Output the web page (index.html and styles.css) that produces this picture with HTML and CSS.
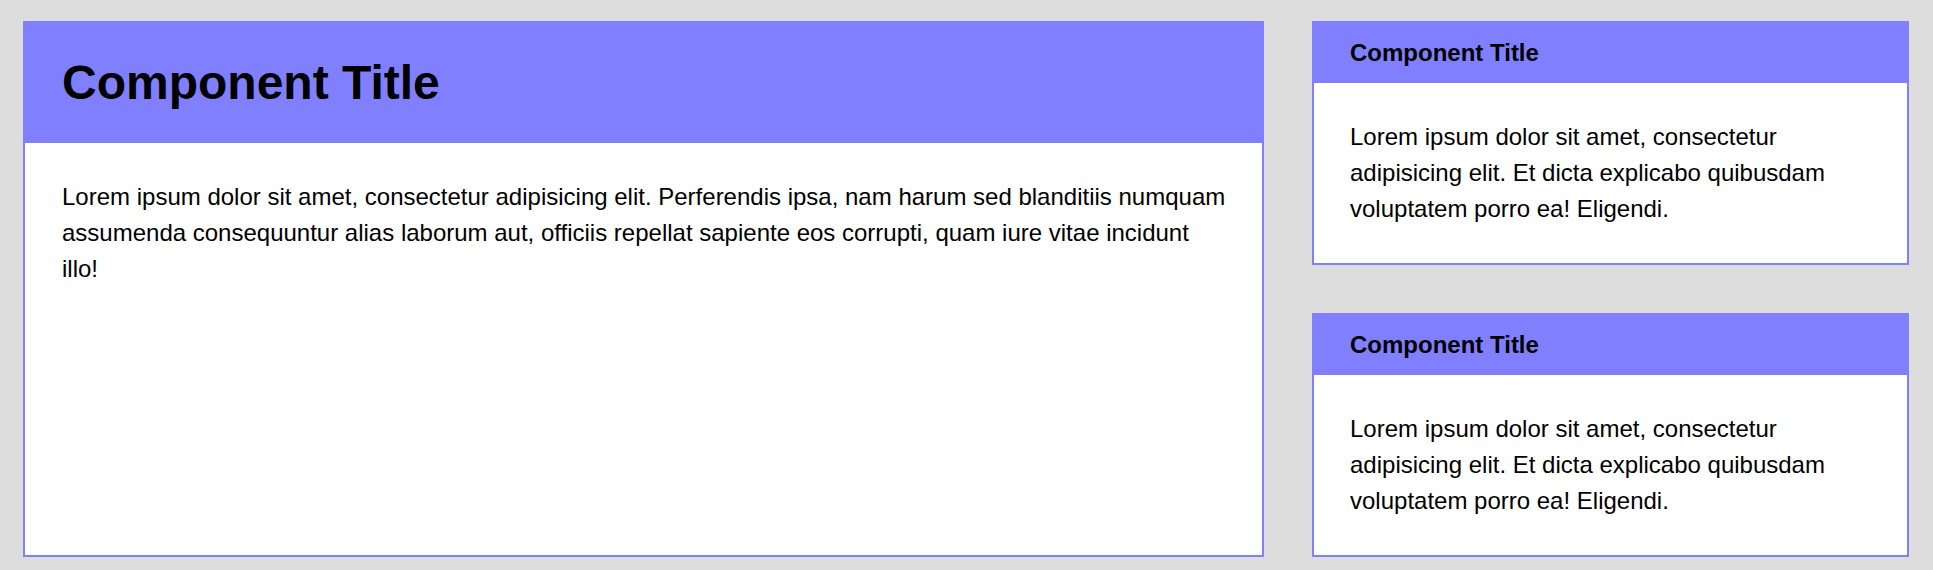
FILE: index.html
```html
<!DOCTYPE html>
<html lang="en">
<head>
<meta charset="utf-8">
<title>Components</title>
<link rel="stylesheet" href="styles.css">
</head>
<body>
<div class="layout">
  <section class="card card-main">
    <header class="card-head">
      <h1 class="title-lg">Component Title</h1>
    </header>
    <div class="card-body">
      <p>Lorem ipsum dolor sit amet, consectetur adipisicing elit. Perferendis ipsa, nam harum sed blanditiis numquam assumenda consequuntur alias laborum aut, officiis repellat sapiente eos corrupti, quam iure vitae incidunt illo!</p>
    </div>
  </section>
  <aside class="side">
    <section class="card card-small">
      <header class="card-head small">
        <h2 class="title-sm">Component Title</h2>
      </header>
      <div class="card-body">
        <p>Lorem ipsum dolor sit amet, consectetur adipisicing elit. Et dicta explicabo quibusdam voluptatem porro ea! Eligendi.</p>
      </div>
    </section>
    <section class="card card-small">
      <header class="card-head small">
        <h2 class="title-sm">Component Title</h2>
      </header>
      <div class="card-body">
        <p>Lorem ipsum dolor sit amet, consectetur adipisicing elit. Et dicta explicabo quibusdam voluptatem porro ea! Eligendi.</p>
      </div>
    </section>
  </aside>
</div>
</body>
</html>
```
FILE: styles.css
```css
html, body {
  margin: 0;
  padding: 0;
}

body {
  background: #dddddd;
  font-family: "Liberation Sans", Arial, Helvetica, sans-serif;
  font-size: 24px;
  line-height: 36px;
  color: #000;
}

.layout {
  display: grid;
  grid-template-columns: 1fr 597px;
  column-gap: 48px;
  padding: 21px 24px 13px 23px;
}

.card {
  background: #fff;
  border: 2px solid #8080ff;
  display: flex;
  flex-direction: column;
}

.card-head {
  background: #8080ff;
  padding: 36px 37px;
}

.card-head.small {
  padding: 12px 36px;
}

.title-lg {
  margin: 0;
  font-size: 48px;
  line-height: 48px;
  font-weight: bold;
}

.title-sm {
  margin: 0;
  font-size: 24px;
  line-height: 36px;
  font-weight: bold;
}

.card-body {
  padding: 36px 36px 36px 37px;
}

.card-body p {
  margin: 0;
}

.side {
  display: flex;
  flex-direction: column;
  gap: 48px;
}

.card-small .card-body {
  padding: 36px;
}
```
